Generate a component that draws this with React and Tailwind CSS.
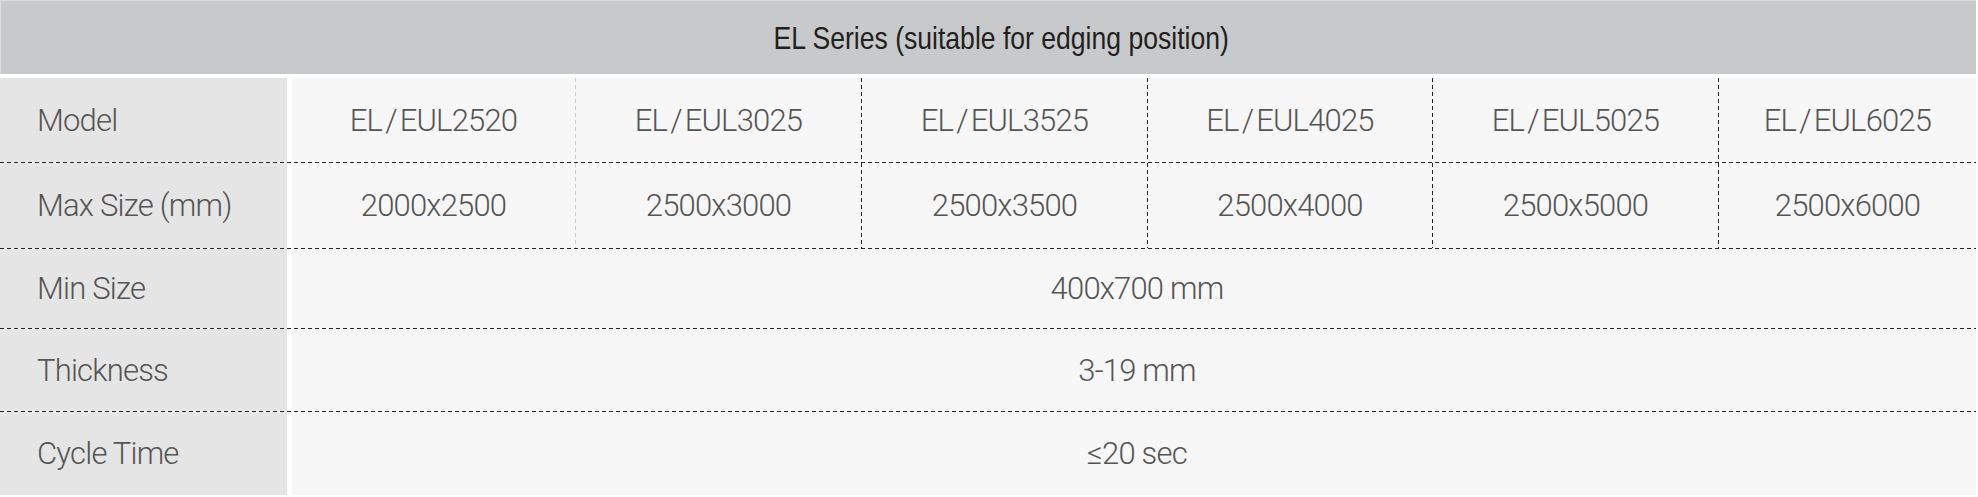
import React from "react";

const models = ["2520", "3025", "3525", "4025", "5025", "6025"];
const sizes = ["2000x2500", "2500x3000", "2500x3500", "2500x4000", "2500x5000", "2500x6000"];
const colW = ["w-[283px]", "w-[285px]", "w-[285px]", "w-[284px]", "w-[285px]", "flex-1"];

const body = "font-['Roboto',Arial,sans-serif] font-light text-[31px] tracking-[-0.8px] text-[#555555]";

function HDash() {
  return (
    <div className="h-[1px] w-full bg-[repeating-linear-gradient(to_right,#2b2526_0px,#2b2526_4px,transparent_4px,transparent_7px)]" />
  );
}

function VDash({ light }) {
  return light ? (
    <div className="w-[1px] shrink-0 self-stretch bg-[repeating-linear-gradient(to_bottom,#cccccc_0px,#cccccc_4px,transparent_4px,transparent_7px)]" />
  ) : (
    <div className="w-[1px] shrink-0 self-stretch bg-[repeating-linear-gradient(to_bottom,#2b2526_0px,#2b2526_4px,transparent_4px,transparent_7px)]" />
  );
}

function Row({ h, label, children }) {
  return (
    <div className={`flex ${h}`}>
      <div className="w-[287px] shrink-0 bg-[#e5e5e5] flex items-center pl-[37px]">
        <span className="leading-none">{label}</span>
      </div>
      <div className="w-[5px] shrink-0 bg-white" />
      <div className="flex-1 bg-[#f7f7f7] flex">{children}</div>
    </div>
  );
}

function Cells({ items, render }) {
  return items.map((it, i) => (
    <React.Fragment key={it}>
      {i > 0 && <VDash light={i === 1} />}
      <div className={`${colW[i]} shrink-0 flex items-center justify-center`}>
        <span className="leading-none whitespace-nowrap">{render(it)}</span>
      </div>
    </React.Fragment>
  ));
}

export default function App() {
  return (
    <div className={`w-[1976px] bg-white ${body}`}>
      <div className="h-[74px] bg-[#c8c9cb] border-t border-l border-[#dcdddf] flex items-center justify-center pl-[26px]">
        <span className="inline-block scale-x-[0.83] font-['Liberation_Sans',Arial,sans-serif] font-normal text-[32px] tracking-[0px] text-[#231f20] leading-none whitespace-nowrap">
          EL Series (suitable for edging position)
        </span>
      </div>
      <div className="h-[4px] bg-white" />
      <Row h="h-[84px]" label="Model">
        <Cells
          items={models}
          render={(m) => (
            <>
              EL<span className="mx-[3px]">/</span>EUL{m}
            </>
          )}
        />
      </Row>
      <HDash />
      <Row h="h-[85px]" label="Max Size (mm)">
        <Cells items={sizes} render={(s) => s} />
      </Row>
      <HDash />
      <Row h="h-[79px]" label="Min Size">
        <div className="flex-1 flex items-center justify-center pl-[6px]">
          <span className="leading-none">400x700 mm</span>
        </div>
      </Row>
      <HDash />
      <Row h="h-[82px]" label="Thickness">
        <div className="flex-1 flex items-center justify-center pl-[6px]">
          <span className="leading-none">3-19 mm</span>
        </div>
      </Row>
      <HDash />
      <Row h="h-[83px]" label="Cycle Time">
        <div className="flex-1 flex items-center justify-center pl-[6px]">
          <span className="leading-none">≤20 sec</span>
        </div>
      </Row>
    </div>
  );
}
